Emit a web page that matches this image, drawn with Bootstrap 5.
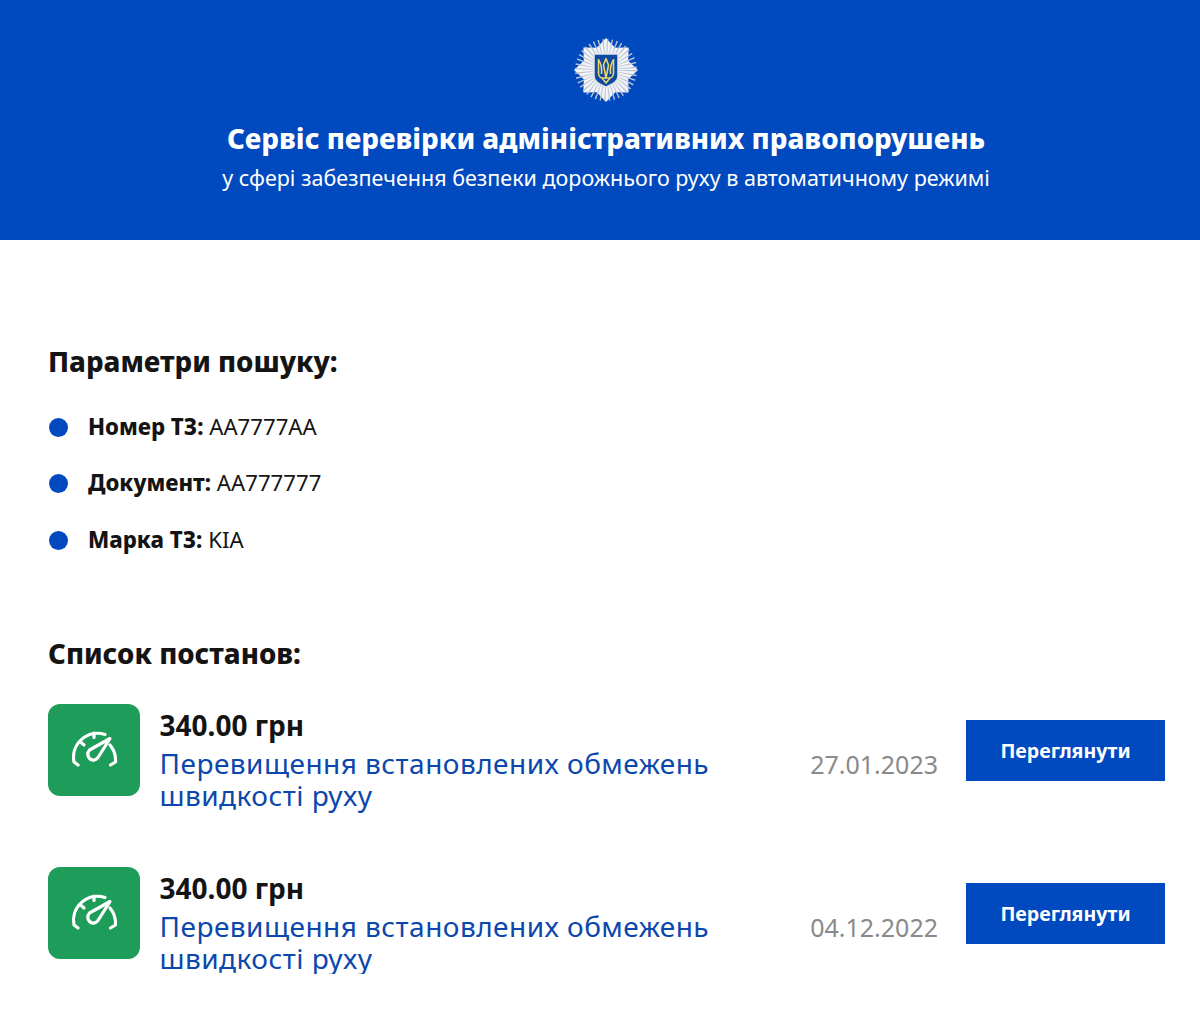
<!DOCTYPE html>
<html lang="uk">
<head>
    <meta charset="UTF-8">
    <meta name="viewport" content="width=device-width, initial-scale=1.0">
    <title>Сервіс перевірки</title>
    <link href="https://cdn.jsdelivr.net/npm/bootstrap@5.3.0/dist/css/bootstrap.min.css" rel="stylesheet">
    <style>
        body { font-family: "Noto Sans", sans-serif; color: #141414; background: #fff; }
        .hero { background: #0049bf; height: 240px; padding: 37px 0 0 12px; color: #fff; }
        .hero-logo { display: block; width: 66px; height: 66px; margin: 0 auto 17px; }
        .hero-title { font-size: 27.8px; line-height: 36px; font-weight: 800; margin: 0; }
        .hero-sub { font-size: 21.5px; line-height: 28px; margin: 8px 0 0; }
        .page-body { padding: 103px 35px 0 48px; }
        .sect-title { font-size: 27.7px; line-height: 36px; font-weight: 800; margin: 0; }
        .param-list { margin: 32.5px 0 0; padding: 0; list-style: none; }
        .param-list li { font-size: 22.2px; line-height: 30px; margin-bottom: 26.5px; padding-left: 40px; position: relative; }
        .param-list li::before { content: ""; position: absolute; left: 1px; top: 6px; width: 19px; height: 19px; border-radius: 50%; background: #0049bf; }
        .param-list b { font-weight: 800; }
        .sect-gap { margin-top: 80.5px; }
        .fine-row { margin-top: 33px; }
        .fine-row + .fine-row { margin-top: 56px; }
        .fine-icon { width: 92px; height: 92px; border-radius: 12px; background: #1e9c5a; flex: none; }
        .fine-text { padding: 3px 0 0 19.5px; }
        .fine-sum { font-size: 28px; line-height: 36px; font-weight: 700; }
        .fine-name { font-size: 28px; line-height: 32px; color: #0b47ad; width: 590px; margin-top: 4px; letter-spacing: .47px; }
        .fine-date { font-size: 25px; line-height: 36px; color: #8a8a8a; margin: 42px 28px 0 0; }
        .fine-btn { width: 199px; height: 61px; margin-top: 16px; background: #0049bf; color: #fff; border: 0; border-radius: 0; font-size: 19.6px; font-weight: 700; }
    </style>
</head>
<body>
<header class="hero text-center">
    <svg class="hero-logo" viewBox="0 0 66 66">
        <polygon fill="#f2f4f7" points="33,1 42.2,10.8 55.6,10.4 55.2,23.8 65,33 55.2,42.2 55.6,55.6 42.2,55.2 33,65 23.8,55.2 10.4,55.6 10.8,42.2 1,33 10.8,23.8 10.4,10.4 23.8,10.8"/>
        <circle cx="33" cy="33" r="21" fill="none" stroke="#bcc4d0" stroke-width="20" stroke-dasharray="1 2.3"/>
        <path fill="#0b4a9e" stroke="#dfe5ec" stroke-width="1.5" d="M21 17h24v22c0 6-6 8-12 11-6-3-12-5-12-11z"/>
        <g fill="none" stroke="#e8d274" stroke-width="1.6" stroke-linejoin="round">
            <path d="M33 21.5 30.5 28 33 41l2.5-13z"/>
            <path d="M25.5 22v14c0 3 2 5 4.500 5h6c2.500 0 4.500-2 4.500-5V22"/>
            <path d="M25.5 23c3 4 3.500 9 3 14M40.500 23c-3 4-3.500 9-3 14M29 41l4 5 4-5"/>
        </g>
    </svg>
    <h1 class="hero-title">Сервіс перевірки адміністративних правопорушень</h1>
    <p class="hero-sub">у сфері забезпечення безпеки дорожнього руху в автоматичному режимі</p>
</header>

<main class="page-body">
    <h2 class="sect-title">Параметри пошуку:</h2>
    <ul class="param-list">
        <li><b>Номер ТЗ:</b> AA7777AA</li>
        <li><b>Документ:</b> AA777777</li>
        <li><b>Марка ТЗ:</b> KIA</li>
    </ul>

    <h2 class="sect-title sect-gap">Список постанов:</h2>

    <div class="fine-row d-flex align-items-start">
        <div class="fine-icon">
            <svg width="92" height="92" viewBox="0 0 92 92" fill="none" stroke="#fff" stroke-width="3.2" stroke-linecap="round" stroke-linejoin="round">
                <path d="M30 61 26 58A24 24 0 0 1 57 30.500M62 41A24 24 0 0 1 67.500 58L62.500 61"/>
                <path d="M46 29v4.500M32 37.500l4 3.500"/>
                <path d="M62 34.500 41.500 46C39 49 39.500 52 41.500 54.500 44 57 47.500 56.500 50 53.500z"/>
            </svg>
        </div>
        <div class="fine-text flex-grow-1">
            <div class="fine-sum">340.00 грн</div>
            <div class="fine-name">Перевищення встановлених обмежень швидкості руху</div>
        </div>
        <div class="fine-date">27.01.2023</div>
        <button class="btn fine-btn">Переглянути</button>
    </div>

    <div class="fine-row d-flex align-items-start">
        <div class="fine-icon">
            <svg width="92" height="92" viewBox="0 0 92 92" fill="none" stroke="#fff" stroke-width="3.2" stroke-linecap="round" stroke-linejoin="round">
                <path d="M30 61 26 58A24 24 0 0 1 57 30.500M62 41A24 24 0 0 1 67.500 58L62.500 61"/>
                <path d="M46 29v4.500M32 37.500l4 3.500"/>
                <path d="M62 34.500 41.500 46C39 49 39.500 52 41.500 54.500 44 57 47.500 56.500 50 53.500z"/>
            </svg>
        </div>
        <div class="fine-text flex-grow-1">
            <div class="fine-sum">340.00 грн</div>
            <div class="fine-name">Перевищення встановлених обмежень швидкості руху</div>
        </div>
        <div class="fine-date">04.12.2022</div>
        <button class="btn fine-btn">Переглянути</button>
    </div>
</main>
<script src="https://cdn.jsdelivr.net/npm/bootstrap@5.3.0/dist/js/bootstrap.bundle.min.js"></script>
</body>
</html>
